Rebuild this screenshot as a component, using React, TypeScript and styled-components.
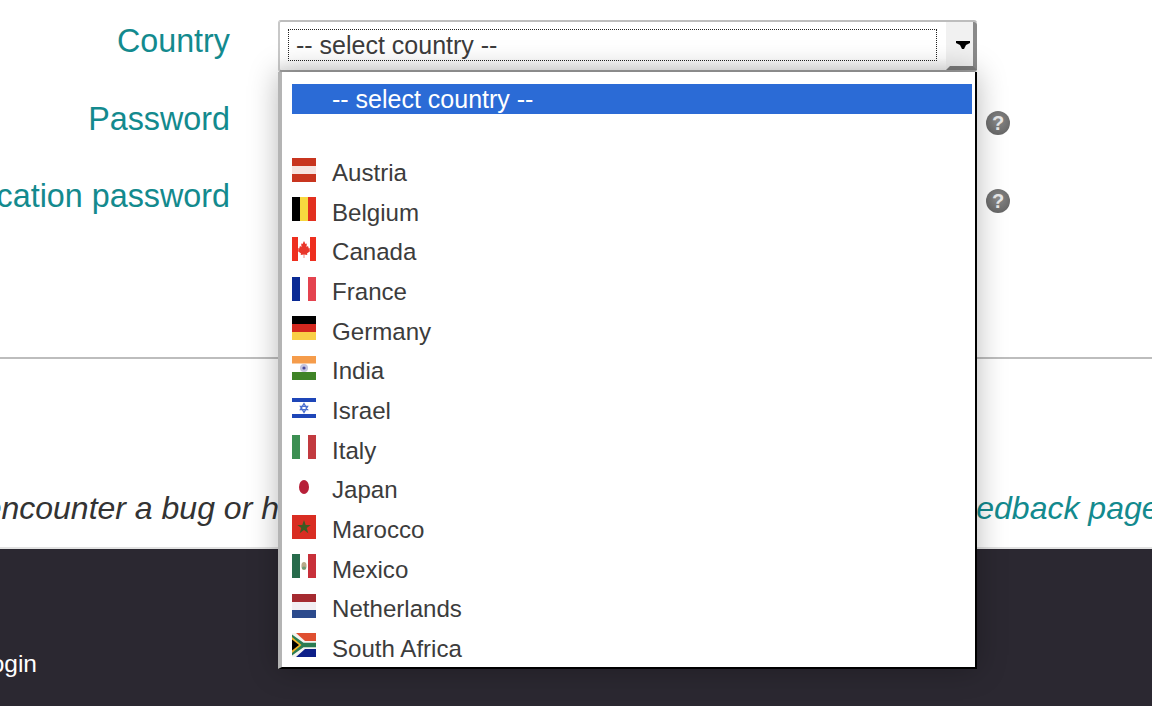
import React from 'react'
import styled, { createGlobalStyle } from 'styled-components'

const GlobalStyle = createGlobalStyle`
  html, body {
    margin: 0;
    padding: 0;
    background: #fff;
    overflow: hidden;
  }
  body {
    font-family: "Liberation Sans", Arial, sans-serif;
  }
`

const flags: Record<string, React.ReactNode> = {
  Austria: (
    <>
      <rect y="0" width="24" height="8" fill="#c8351f" />
      <rect y="8" width="24" height="8" fill="#f6e4e0" />
      <rect y="16" width="24" height="8" fill="#c8351f" />
    </>
  ),
  Belgium: (
    <>
      <rect width="8" height="24" fill="#000" />
      <rect x="8" width="8" height="24" fill="#f7d83f" />
      <rect x="16" width="8" height="24" fill="#e2301f" />
    </>
  ),
  Canada: (
    <>
      <rect width="6" height="24" fill="#ee2f1f" />
      <rect x="18" width="6" height="24" fill="#ee2f1f" />
      <path d="M12 4l1.500 3 1.300-.5-.3 3.500 1.500-1 .8 2.500 1.200-.2-.5 2 .8.600-3.300 2.600.3 1.500-3-.4V21h-.6v-3.400l-3 .4.300-1.500-3.300-2.600.8-.6-.5-2 1.200.2.800-2.500 1.500 1-.3-3.500 1.300.5z" fill="#e9372b" />
    </>
  ),
  France: (
    <>
      <rect width="8" height="24" fill="#0a2a94" />
      <rect x="16" width="8" height="24" fill="#e4434f" />
    </>
  ),
  Germany: (
    <>
      <rect width="24" height="8" fill="#000" />
      <rect y="8" width="24" height="8" fill="#d3281f" />
      <rect y="16" width="24" height="8" fill="#f9cf47" />
    </>
  ),
  India: (
    <>
      <rect width="24" height="7.500" fill="#f59c4b" />
      <rect y="16" width="24" height="8" fill="#3f8427" />
      <circle cx="12" cy="12" r="4" fill="#c4c4de" />
      <circle cx="12" cy="12" r="1.600" fill="#4a4a9a" />
    </>
  ),
  Israel: (
    <>
      <rect y="2" width="24" height="4" fill="#1e46b8" />
      <rect y="18" width="24" height="4" fill="#1e46b8" />
      <path d="M12 7.500l3.600 6.200H8.400zM12 16.500l-3.600-6.200h7.200z" fill="none" stroke="#4a6fd0" strokeWidth="1.300" />
    </>
  ),
  Italy: (
    <>
      <rect width="8" height="24" fill="#3c8f52" />
      <rect x="16" width="8" height="24" fill="#c23a3f" />
    </>
  ),
  Japan: <ellipse cx="12" cy="12" rx="5" ry="7" fill="#b71f38" />,
  Marocco: (
    <>
      <rect width="24" height="24" fill="#d92d22" />
      <path d="M12 5l1.700 5h5.100l-4.100 3.100 1.600 5.100-4.300-3.200-4.300 3.200 1.600-5.100-4.100-3.100h5.100z" fill="#3d5a22" />
    </>
  ),
  Mexico: (
    <>
      <rect width="8" height="24" fill="#276b4b" />
      <rect x="16" width="8" height="24" fill="#c8303a" />
      <ellipse cx="12" cy="12" rx="2.600" ry="4" fill="#b8a98a" />
      <ellipse cx="12" cy="14" rx="2" ry="1.600" fill="#6f9a76" />
    </>
  ),
  Netherlands: (
    <>
      <rect width="24" height="8" fill="#a52a30" />
      <rect y="8" width="24" height="8" fill="#f2eef2" />
      <rect y="16" width="24" height="8" fill="#2c4a8c" />
    </>
  ),
  'South Africa': (
    <>
      <rect width="24" height="12" fill="#df4f30" />
      <rect y="12" width="24" height="12" fill="#0d1f88" />
      <path d="M0 0h4l9 8h11v8H13l-9 8H0z" fill="#f4f4f0" />
      <path d="M0 1.500L11.500 9.800H24v4.400H11.500L0 22.500z" fill="#2b7c52" />
      <path d="M0 4l9.500 8L0 20z" fill="#f0b429" />
      <path d="M0 6.500L7 12l-7 5.500z" fill="#000" />
    </>
  ),
}

const countries = Object.keys(flags)

export default function App() {
  return (
    <Page>
      <GlobalStyle />
      <Form>
        <Row>
          <Label>Country</Label>
          <Field>
            <SelectBox>
              <FocusRing>-- select country --</FocusRing>
              <ArrowButton>
                <svg width="14" height="8" viewBox="0 0 14 8">
                  <path d="M0 0h14v2l-4 2-2 4H6L4 4 0 2z" fill="#000" />
                </svg>
              </ArrowButton>
            </SelectBox>
            <Popup>
              <Selected>-- select country --</Selected>
              <Blank />
              {countries.map(name => (
                <Option key={name}>
                  <svg width="24" height="24" viewBox="0 0 24 24">
                    {flags[name]}
                  </svg>
                  <span>{name}</span>
                </Option>
              ))}
            </Popup>
          </Field>
        </Row>
        <Row>
          <Label>Password</Label>
          <Field />
          <Help>?</Help>
        </Row>
        <Row>
          <Label>Application password</Label>
          <Field />
          <Help>?</Help>
        </Row>
      </Form>
      <Divider />
      <Notice>
        <span>
          If you encounter a bug or have a suggestion to improve this site, go to our <a>feedback page</a>
        </span>
      </Notice>
      <Footer>
        <FooterLink>Login</FooterLink>
      </Footer>
    </Page>
  )
}

const Page = styled.div`
  width: 1152px;
  height: 706px;
  overflow: hidden;
  display: flex;
  flex-direction: column;
`

const Form = styled.div`
  height: 337px;
  padding-top: 20px;
  display: flex;
  flex-direction: column;
  gap: 26px;
`

const Row = styled.div`
  display: flex;
  height: 51.500px;
  flex: none;
`

const Label = styled.div`
  flex: none;
  width: 230px;
  display: flex;
  justify-content: flex-end;
  white-space: nowrap;
  font-size: 32.300px;
  line-height: 43px;
  color: #138a8e;
`

const Field = styled.div`
  flex: none;
  position: relative;
  width: 699px;
  margin-left: 48px;
`

const SelectBox = styled.div`
  box-sizing: border-box;
  height: 52px;
  display: flex;
  background: linear-gradient(#fff 75%, #f2f2f2);
  border-top: 2px solid #bdbdbd;
  border-left: 2px solid #c8c8c8;
  border-bottom: 2px solid #a0a0a0;
  border-radius: 3px;
  padding-left: 8px;
`

const FocusRing = styled.div`
  box-sizing: border-box;
  flex: none;
  width: 649px;
  height: 32px;
  margin-top: 7px;
  padding-left: 7px;
  border: 1px dotted #222;
  font-size: 25px;
  line-height: 31px;
  color: #3c3c3c;
`

const ArrowButton = styled.div`
  box-sizing: border-box;
  flex: none;
  width: 31px;
  margin-left: 9px;
  display: flex;
  align-items: center;
  justify-content: center;
  padding: 2px 0 0 3px;
  background: #f1f1f1;
  border-left: 4px solid #f1f1f1;
  border-right: 4px solid #8a8a8a;
  border-bottom: 4px solid #7c7c7c;
  border-radius: 0 3px 0 0;
`

const Popup = styled.div`
  position: absolute;
  z-index: 5;
  top: 52px;
  left: 0;
  box-sizing: border-box;
  width: 699px;
  height: 597px;
  padding: 12px 3px 0 10px;
  overflow: hidden;
  background: #fff;
  border-left: 4px solid #b4b4b4;
  border-right: 2px solid #000;
  border-bottom: 2px solid #000;
  box-shadow: 0 0 28px rgba(0, 0, 0, 0.28);
  font-size: 24.100px;
  color: #3c3c3c;
`

const Selected = styled.div`
  height: 30px;
  padding-left: 40px;
  background: #2b6bd6;
  color: #fff;
  font-size: 25px;
  line-height: 30px;
`

const Blank = styled.div`
  height: 39.100px;
`

const Option = styled.div`
  height: 39.650px;
  display: flex;
  align-items: flex-start;
  gap: 16px;
  line-height: 39.650px;
  svg {
    flex: none;
    margin-top: 4.700px;
  }
`

const Help = styled.span`
  flex: none;
  width: 24px;
  height: 24px;
  margin: 13.500px 0 0 9px;
  border-radius: 50%;
  display: flex;
  align-items: center;
  justify-content: center;
  background: radial-gradient(circle at 50% 40%, #8a8a8a, #5c5c5c);
  color: #e8e8e8;
  font-size: 20px;
  font-weight: 700;
  line-height: 24px;
`

const Divider = styled.div`
  flex: none;
  height: 2px;
  background: #bdbdbd;
`

const Notice = styled.div`
  flex: none;
  height: 188px;
  padding: 129px 96px 0 0;
  box-sizing: border-box;
  display: flex;
  justify-content: center;
  white-space: nowrap;
  font-size: 32px;
  font-style: italic;
  line-height: 40px;
  color: #333;
  a {
    color: #138a8e;
  }
`

const Footer = styled.div`
  flex: 1;
  background: #2b2831;
  border-top: 2px solid #e2e2e2;
  padding-top: 101px;
`

const FooterLink = styled.a`
  display: block;
  margin-left: -23px;
  color: #fff;
  font-size: 24.500px;
  line-height: 28px;
`
